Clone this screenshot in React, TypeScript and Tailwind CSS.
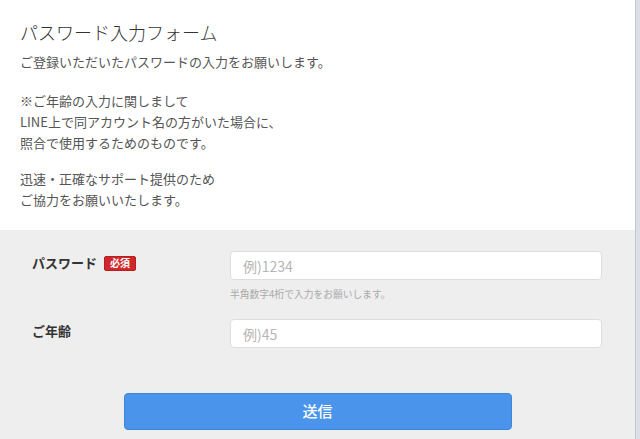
import React from "react";

const font = { fontFamily: '"Noto Sans CJK JP", "Noto Sans", sans-serif' };

const Field = ({
  label,
  required,
  placeholder,
  note,
}: {
  label: string;
  required?: boolean;
  placeholder: string;
  note?: string;
}) => (
  <div className="flex items-start">
    <div className="w-[198px] h-[29px] pb-[5px] flex items-center gap-[7px]">
      <span className="text-[13px] font-bold text-[#333333]">{label}</span>
      {required && (
        <span className="h-[15px] px-[5px] flex items-center rounded-[2px] bg-[#d0282a] border border-[#b51f22] text-[10px] font-bold leading-none text-white">
          必須
        </span>
      )}
    </div>
    <div className="w-[372px] flex flex-col">
      <input
        type="text"
        placeholder={placeholder}
        className="h-[29px] w-full rounded-[4px] border border-[#dddddd] bg-white px-3 text-[14px] text-[#333333] placeholder:text-[#b5b5b5] outline-none"
        style={font}
      />
      {note && (
        <p className="mt-[7px] text-[9.75px] leading-[14px] text-[#aaaaaa]">{note}</p>
      )}
    </div>
  </div>
);

export default function App() {
  return (
    <div style={font} className="flex w-full min-h-[439px]">
      <div className="flex-1 flex flex-col">
        <div className="bg-white px-5 pt-5 pb-[20px]">
          <h1 className="text-[18px] leading-6 font-light text-[#333333]">
            パスワード入力フォーム
          </h1>
          <div className="text-[13px] leading-[21px] text-[#555555]">
            <p className="mt-[7px]">ご登録いただいたパスワードの入力をお願いします。</p>
            <p className="mt-[18px]">
              ※ご年齢の入力に関しまして
              <br />
              LINE上で同アカウント名の方がいた場合に、
              <br />
              照合で使用するためのものです。
            </p>
            <p className="mt-[15px]">
              迅速・正確なサポート提供のため
              <br />
              ご協力をお願いいたします。
            </p>
          </div>
        </div>
        <div className="flex-1 bg-[#eeeeee] pl-8 pt-[21px] flex flex-col">
          <Field
            label="パスワード"
            required
            placeholder="例)1234"
            note="半角数字4桁で入力をお願いします。"
          />
          <div className="mt-[18px]">
            <Field label="ご年齢" placeholder="例)45" />
          </div>
          <div className="mt-[45px] -ml-8 flex justify-center">
            <button className="w-[388px] h-[37px] rounded-[4px] bg-[#4a95eb] border border-[#3f86d8] text-[15px] font-medium text-white">
              送信
            </button>
          </div>
        </div>
      </div>
      <div className="w-[5px] bg-[#dcdfe5] border-l border-[#c4c8d0]" />
    </div>
  );
}
